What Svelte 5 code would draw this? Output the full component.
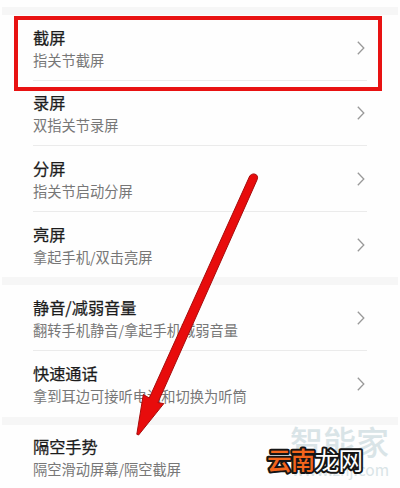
<script>
  const groups = [
    [
      { title: '截屏', detail: '指关节截屏' },
      { title: '录屏', detail: '双指关节录屏' },
      { title: '分屏', detail: '指关节启动分屏' },
      { title: '亮屏', detail: '拿起手机/双击亮屏' },
    ],
    [
      { title: '静音/减弱音量', detail: '翻转手机静音/拿起手机减弱音量' },
      { title: '快速通话', detail: '拿到耳边可接听电话和切换为听筒' },
    ],
    [{ title: '隔空手势', detail: '隔空滑动屏幕/隔空截屏', plain: true }],
  ];
</script>

<main class="screen">
  {#each groups as group}
    <section class="group">
      {#each group as item}
        <div class="row">
          <div class="label">
            <div class="title">{item.title}</div>
            <div class="detail">{item.detail}</div>
          </div>
          {#if !item.plain}
            <svg class="chevron" viewBox="0 0 8 14">
              <path d="M0.8 0.8 L6.8 7 L0.8 13.2" />
            </svg>
          {/if}
        </div>
      {/each}
    </section>
  {/each}

  <!-- Site watermark -->
  <div class="watermark">
    <div class="watermark-name">智能家</div>
    <div class="watermark-url">www.znj.com</div>
  </div>

  <svg class="brand" viewBox="0 0 110 36">
    <text x="7" y="27.5" textLength="96"><tspan class="orange">云南</tspan><tspan>龙网</tspan></text>
  </svg>

  <!-- Highlight box and arrow -->
  <div class="highlight"></div>
  <svg class="arrow" viewBox="0 0 400 488">
    <path
      d="M249.8 175.8 Q253.3 172.3 256.8 175.2 Q258.2 177 257.2 179.5 L157.9 402.6 L163.8 403.6 L138.6 435 L136.8 434.3 L143.3 394.5 L149.3 398 Z"
    />
  </svg>
</main>

<style>
  :global(body) {
    margin: 0;
    background: #fefefe;
  }

  .screen {
    position: relative;
    box-sizing: border-box;
    width: 400px;
    height: 488px;
    padding: 7px 2px 0;
    overflow: hidden;
    background: #fefefe;
    font-family: 'Noto Sans CJK SC', sans-serif;
  }

  .group {
    border-top: 8.5px solid #f6f6f6;
  }

  .row {
    display: flex;
    align-items: center;
    justify-content: space-between;
    box-sizing: border-box;
    height: 65.6px;
    margin: 0 31px;
    border-bottom: 1px solid #ebebeb;
  }

  .row:last-child {
    border-bottom-color: transparent;
  }

  .label {
    white-space: nowrap;
  }

  .title {
    font-size: 16.2px;
    line-height: 24px;
    font-weight: 400;
    color: #1c1c1c;
    -webkit-text-stroke: 0.25px #1c1c1c;
  }

  .detail {
    font-size: 14.25px;
    line-height: 21px;
    color: #777;
  }

  .chevron {
    width: 8px;
    height: 14px;
    margin: 1px 2px 0 0;
    fill: none;
    stroke: #999;
    stroke-width: 1.3;
  }

  .watermark {
    position: absolute;
    right: 11px;
    top: 424px;
    text-align: right;
    color: #d9e4e7;
  }

  .watermark-name {
    font-size: 33px;
    line-height: 34px;
    font-weight: 500;
  }

  .watermark-url {
    font-size: 15.5px;
    line-height: 22px;
  }

  .brand {
    position: absolute;
    left: 260px;
    top: 442px;
    width: 110px;
    height: 36px;
    font-size: 24.5px;
    font-weight: 400;
    fill: #fff;
    stroke: #151515;
    stroke-width: 4px;
    stroke-linejoin: round;
    paint-order: stroke;
  }

  .orange {
    font-weight: 500;
    fill: #f4651c;
  }

  .highlight {
    position: absolute;
    left: 14px;
    top: 16px;
    box-sizing: border-box;
    width: 368px;
    height: 75px;
    border: 4px solid #e81212;
  }

  .arrow {
    position: absolute;
    left: 0;
    top: 0;
    width: 400px;
    height: 488px;
    fill: #e80c0c;
    stroke: #a80c0c;
    stroke-width: 1;
    stroke-linejoin: round;
  }
</style>
